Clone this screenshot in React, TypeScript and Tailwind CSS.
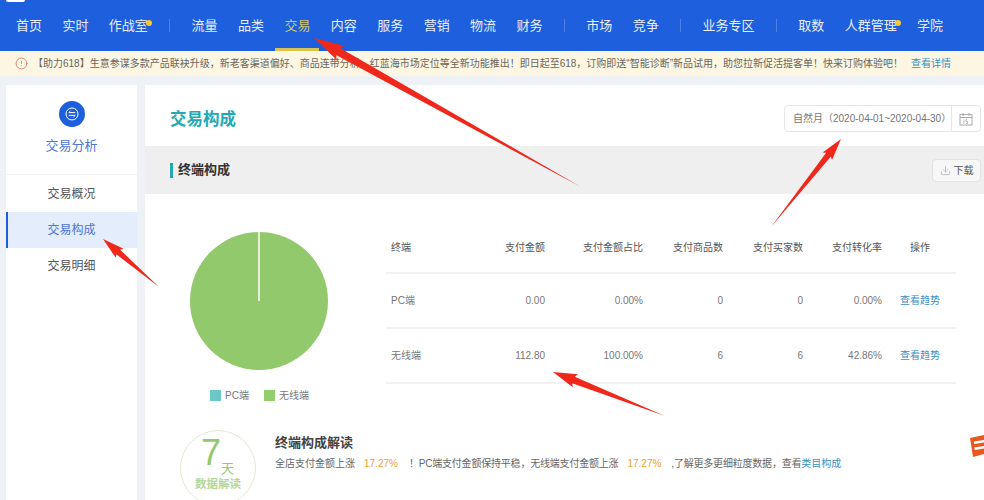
import { CircleAlert, Download } from "lucide-react";

const FONT = "font-['Liberation_Sans','Noto_Sans_CJK_SC',sans-serif]";

const groups = [
  ["首页", "实时", "作战室"],
  ["流量", "品类", "交易", "内容", "服务", "营销", "物流", "财务"],
  ["市场", "竞争"],
  ["业务专区"],
  ["取数", "人群管理", "学院"],
];

const rows = [
  { name: "PC端", amount: "0.00", share: "0.00%", items: "0", buyers: "0", rate: "0.00%" },
  { name: "无线端", amount: "112.80", share: "100.00%", items: "6", buyers: "6", rate: "42.86%" },
];

function NavItem({ label }: { label: string }) {
  const active = label === "交易";
  const dot = label === "作战室" || label === "人群管理";
  return (
    <div className="relative flex h-[51px] items-center whitespace-nowrap">
      <span className={active ? "text-[#cfc86a]" : "text-[#e8eefb]"}>{label}</span>
      {dot && <span className="absolute top-[20px] right-[-4px] h-[6px] w-[6px] rounded-full bg-[#f5c92f]" />}
      {active && <span className="absolute right-[-9px] bottom-0 left-[-9px] h-[3px] bg-[#d9c452]" />}
    </div>
  );
}

function Header() {
  return (
    <header className="relative flex h-[51px] items-center gap-[20.4px] bg-[#1d5fdc] pl-4 text-[13px]">
      <span className="absolute top-0 left-[6px] h-[2px] w-[19px] rounded-b bg-white" />
      {groups.map((group, i) => (
        <div key={i} className="flex items-center gap-[20.4px]">
          {i > 0 && <span className="mx-[1px] h-[13px] w-px bg-[#4c80e4]" />}
          {group.map((label) => (
            <NavItem key={label} label={label} />
          ))}
        </div>
      ))}
    </header>
  );
}

function Notice() {
  return (
    <div className="flex h-[25px] items-center bg-[#fdf6e3] pl-[15px] text-[10px] whitespace-nowrap text-[#6b675c]">
      <CircleAlert className="mr-[5px] h-[13px] w-[13px] text-[#d9705a]" strokeWidth={1.5} />
      <span className="w-[878px]">
        【助力618】生意参谋多款产品联袂升级，新老客渠道偏好、商品连带分析、红蓝海市场定位等全新功能推出！即日起至618，订购即送“智能诊断”新品试用，助您拉新促活提客单！快来订购体验吧！
      </span>
      <a className="text-[#3b8fc4]">查看详情</a>
    </div>
  );
}

function Sidebar() {
  return (
    <aside className="w-[131px] shrink-0 bg-white">
      <div className="flex h-[90px] flex-col items-center border-b border-[#f2f2f2] pt-4">
        <div className="flex h-[26px] w-[26px] items-center justify-center rounded-full bg-[#1d5fdc]">
          <svg viewBox="0 0 14 14" className="h-[14px] w-[14px]" fill="none" stroke="#fff" strokeWidth="1">
            <circle cx="7" cy="7" r="6" />
            <path d="M3.8 5.600h6.400M3.800 5.600l1.600-1.500M10.200 8.400H3.800M10.200 8.400l-1.600 1.500" />
          </svg>
        </div>
        <div className="mt-[9px] text-[13px] leading-[20px] text-[#4d74d4]">交易分析</div>
      </div>
      <div className="mt-[1px] text-center text-[12px] text-[#555]">
        <div className="flex h-9 items-center justify-center">交易概况</div>
        <div className="flex h-9 items-center justify-center border-l-2 border-[#1d5fdc] bg-[#e3edfb] pr-[2px] text-[#4d74d4]">
          交易构成
        </div>
        <div className="flex h-9 items-center justify-center">交易明细</div>
      </div>
    </aside>
  );
}

function Pie() {
  return (
    <div className="w-[241px] shrink-0 pt-[38px] pl-[45px]">
      <svg width="138" height="138" viewBox="0 0 138 138" className="block">
        <circle cx="69" cy="69" r="69" fill="#92c96c" />
        <line x1="69" y1="0" x2="69" y2="69" stroke="#fff" strokeWidth="1.5" />
      </svg>
      <div className="mt-[18px] flex items-center text-[10px] text-[#777]">
        <span className="ml-[20px] h-[11px] w-[11px] bg-[#6cc7c7]" />
        <span className="ml-1 w-[39px]">PC端</span>
        <span className="h-[11px] w-[11px] bg-[#92cf6c]" />
        <span className="ml-1">无线端</span>
      </div>
    </div>
  );
}

function DataTable() {
  const th = "h-[54px] border-b-2 border-[#f1f1f1] pt-[3px] text-right font-normal text-[#555]";
  const td = "h-[55px] border-b-2 border-[#f1f1f1] text-right text-[#777]";
  return (
    <table className="mt-[25px] w-[570px] table-fixed border-collapse text-[10px]">
      <colgroup>
        <col className="w-[83px]" />
        <col className="w-[76px]" />
        <col className="w-[98px]" />
        <col className="w-[80px]" />
        <col className="w-[80px]" />
        <col className="w-[79px]" />
        <col />
      </colgroup>
      <thead>
        <tr>
          <th className={`${th} pl-[5px] !text-left`}>终端</th>
          <th className={th}>支付金额</th>
          <th className={th}>支付金额占比</th>
          <th className={th}>支付商品数</th>
          <th className={th}>支付买家数</th>
          <th className={th}>支付转化率</th>
          <th className={`${th} pl-[2px] !text-center`}>操作</th>
        </tr>
      </thead>
      <tbody>
        {rows.map((row) => (
          <tr key={row.name}>
            <td className={`${td} pl-[5px] !text-left`}>{row.name}</td>
            <td className={td}>{row.amount}</td>
            <td className={td}>{row.share}</td>
            <td className={td}>{row.items}</td>
            <td className={td}>{row.buyers}</td>
            <td className={td}>{row.rate}</td>
            <td className={`${td} pl-[2px] !text-center !text-[#3b8fc4]`}>查看趋势</td>
          </tr>
        ))}
      </tbody>
    </table>
  );
}

function Insight() {
  return (
    <div className="mt-[27px] flex pl-[35px]">
      <div className="relative h-[76px] w-[76px] shrink-0 rounded-full border border-[#dfeccf]">
        <span className="absolute top-[4px] left-[20px] text-[36px] leading-[36px] text-[#92c96c]">7</span>
        <span className="absolute top-[31px] left-[40px] text-[13px] leading-[14px] text-[#92c96c]">天</span>
        <span className="absolute top-[46px] left-[14px] text-[11.5px] leading-[15px] font-bold whitespace-nowrap text-[#b4d79b]">数据解读</span>
      </div>
      <div className="ml-[19px] pt-[3px]">
        <div className="text-[13px] leading-[20px] font-bold text-[#444]">终端构成解读</div>
        <div className="mt-[3px] flex text-[10px] leading-[16px] whitespace-nowrap text-[#666]">
          全店支付金额上涨
          <span className="mx-[9px] text-[#f0a030]">17.27%</span>
          <span className="ml-[2px] tracking-[-0.2px]">！PC端支付金额保持平稳，无线端支付金额上涨</span>
          <span className="mx-[9px] text-[#f0a030]">17.27%</span>
          <span className="ml-[1px] tracking-[-0.2px]">,了解更多更细粒度数据，查看</span>
          <a className="text-[#3b8fc4]">类目构成</a>
        </div>
      </div>
    </div>
  );
}

function Main() {
  return (
    <main className="relative min-w-0 flex-1 bg-white">
      <div className="flex h-[61px] items-start justify-between pr-[3px] pl-[25px]">
        <h1 className="pt-[22px] text-[16.5px] leading-[24px] font-bold text-[#21a9b5]">交易构成</h1>
        <div className="mt-5 flex h-[27px] w-[197px] items-center rounded-sm border border-[#e6e6e6] text-[10px] text-[#777]">
          <span className="flex-1 pl-2 whitespace-nowrap">自然月（2020-04-01~2020-04-30）</span>
          <span className="flex h-full w-[31px] items-center justify-center border-l border-[#e6e6e6]">
            <svg viewBox="0 0 14 14" className="h-[14px] w-[14px]" fill="none" stroke="#aaa" strokeWidth="1">
              <rect x="1" y="2.500" width="12" height="10.500" />
              <path d="M1 5.500h12M4 1v3M10 1v3" />
              <path d="M5 7.500v4M8 7.500H7v2h1.500v2H7" strokeWidth="0.8" />
            </svg>
          </span>
        </div>
      </div>
      <div className="flex h-[48px] items-center justify-between bg-[#efefef] pr-[3px] pl-[25px]">
        <div className="flex items-center">
          <span className="h-[15px] w-[3px] bg-[#21a9b5]" />
          <span className="ml-[5px] text-[13px] font-bold text-[#333]">终端构成</span>
        </div>
        <div className="flex h-[23px] w-[49px] items-center justify-center gap-[3px] rounded-sm border border-[#e2e2e2] bg-[#f7f7f7] text-[10px] text-[#555]">
          <Download className="h-[11px] w-[11px] text-[#aaa]" strokeWidth={1.5} />
          下载
        </div>
      </div>
      <div className="flex items-start">
        <Pie />
        <DataTable />
      </div>
      <Insight />
      <svg viewBox="0 0 14 22" className="absolute top-[350px] right-0 h-[22px] w-[14px]">
        <path d="M0 3 14 0v19L3 22Z" fill="#e8591f" />
        <path d="M4 6.500 14 5v2.500L4 9ZM4 12.500 14 11v2.500L5 15Z" fill="#fff" />
      </svg>
    </main>
  );
}

function arrowPoints(x1: number, y1: number, x2: number, y2: number, len: number, wing: number, neck: number) {
  const d = Math.hypot(x2 - x1, y2 - y1);
  const ux = (x2 - x1) / d;
  const uy = (y2 - y1) / d;
  const bx = x2 - ux * len;
  const by = y2 - uy * len;
  const at = (dist: number, w: number) => `${bx + ux * dist - uy * w},${by + uy * dist + ux * w}`;
  return [`${x1},${y1}`, at(-2, neck), at(-4, wing), `${x2},${y2}`, at(-4, -wing), at(-2, -neck)].join(" ");
}

function Arrows() {
  const list = [
    [581, 187, 314, 38, 26, 8, 4],
    [159, 287, 103, 239, 18, 6, 3],
    [771, 227, 841, 139, 18, 6, 3],
    [665, 416, 553, 372, 20, 7, 3.5],
  ];
  return (
    <svg className="pointer-events-none absolute inset-0" width="984" height="500">
      {list.map((a, i) => (
        <polygon key={i} points={arrowPoints(a[0], a[1], a[2], a[3], a[4], a[5], a[6])} fill="#f0281c" />
      ))}
    </svg>
  );
}

export default function App() {
  return (
    <div className={`relative h-[500px] w-[984px] overflow-hidden bg-[#eef1f6] ${FONT}`}>
      <Header />
      <Notice />
      <div className="mt-[9px] flex h-[415px] gap-2 pl-[6px]">
        <Sidebar />
        <Main />
      </div>
      <Arrows />
    </div>
  );
}
